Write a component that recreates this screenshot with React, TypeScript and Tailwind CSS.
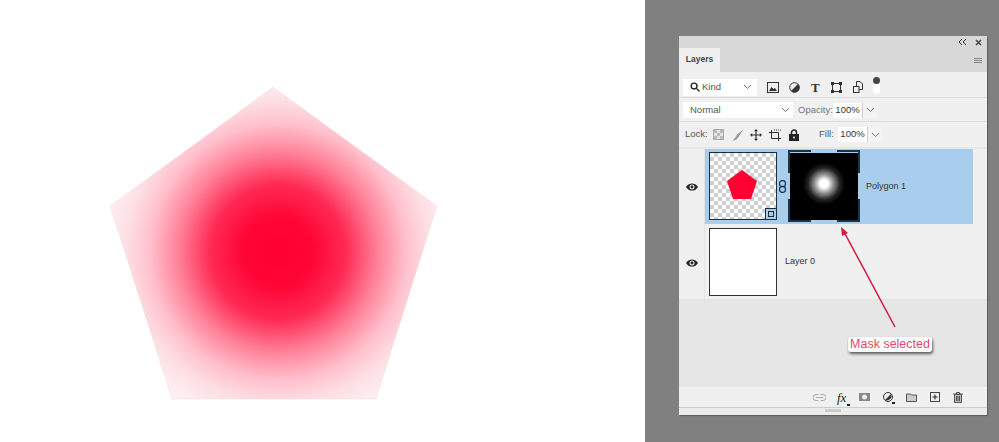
import React from "react";

const Chevron = () => (
  <svg width="9" height="6" viewBox="0 0 9 6" className="shrink-0"><path d="M1 1l3.500 3.500L8 1" fill="none" stroke="#777" strokeWidth="1" /></svg>
);

const Eye = () => (
  <svg width="12" height="8" viewBox="0 0 12 8" className="ml-[1px]"><path d="M0 4C2 1 3.800.4 6 .4S10 1 12 4C10 7 8.200 7.600 6 7.600S2 7 0 4z" fill="#222" /><circle cx="6" cy="4" r="2.500" fill="#eee" /><circle cx="6" cy="4" r="1.400" fill="#222" /></svg>
);

const Toolbar = () => (
  <div className="flex items-center">
    <svg width="12" height="11" viewBox="0 0 12 11" className="ml-[10px]"><rect x=".5" y=".5" width="11" height="10" fill="#f0f0f0" stroke="#333" /><path d="M2 9l2.500-4 2 2 1.500-1 2 3z" fill="#333" /></svg>
    <svg width="11" height="11" viewBox="0 0 11 11" className="ml-[10px]"><circle cx="5.500" cy="5.500" r="4.800" fill="#eee" stroke="#333" /><path d="M9 2A4.800 4.800 0 0 1 2 9z" fill="#333" /></svg>
    <span className="ml-[11px] w-[9px] text-[13px] leading-none font-bold text-[#333] [font-family:'Liberation_Serif',serif]">T</span>
    <svg width="11" height="11" viewBox="0 0 11 11" className="ml-[11px]"><rect x="1.500" y="1.500" width="8" height="8" fill="none" stroke="#333" /><path d="M0 0h3v3H0zM8 0h3v3H8zM0 8h3v3H0zM8 8h3v3H8z" fill="#333" /></svg>
    <svg width="10" height="12" viewBox="0 0 10 12" className="ml-[11px]"><path d="M3.500.5h3.500l2.500 2.500v5.500h-6z" fill="#eee" stroke="#333" /><rect x=".5" y="5.500" width="5.500" height="6" fill="#eee" stroke="#333" /></svg>
    <div className="relative ml-[10px] mt-[3px] h-[11px] w-[7px] rounded-[4px] bg-white">
      <div className="absolute -top-[6px] left-0 h-[7px] w-[7px] rounded-full bg-[#444]" />
    </div>
  </div>
);

const Lock = () => (
  <div className="flex h-full items-center pl-[6px] text-[9.5px] text-[#555]">
    <span className="w-[28px]">Lock:</span>
    <svg width="11" height="11" viewBox="0 0 11 11"><rect x=".5" y=".5" width="10" height="10" fill="#e4e4e4" stroke="#aaa" /><path d="M1 1h3v3H1zM7 1h3v3H7zM4 4h3v3H4zM1 7h3v3H1zM7 7h3v3H7z" fill="#bbb" /></svg>
    <svg width="12" height="12" viewBox="0 0 12 12" className="ml-[8px]"><path d="M11.500 .5L5 5.500 3 9l-2.500 2.500 3.500-.5 2.500-3z" fill="#999" /></svg>
    <svg width="12" height="12" viewBox="0 0 12 12" className="ml-[6px]"><path d="M6 0l2 2.200H6.600v3.200h3.200V4L12 6 9.800 8V6.600H6.600v3.200H8L6 12 4 9.800h1.400V6.600H2.200V8L0 6l2.200-2v1.400h3.200V2.200H4z" fill="#333" /></svg>
    <svg width="12" height="12" viewBox="0 0 12 12" className="ml-[7px]"><path d="M2.500 1v8.500H12M0 3.500h9.500V12" fill="none" stroke="#333" /><path d="M5 1h7" stroke="#333" strokeDasharray="1 1" /></svg>
    <svg width="10" height="12" viewBox="0 0 10 12" className="ml-[8px]"><path d="M2.500 5V3.500a2.500 2.500 0 0 1 5 0V5" fill="none" stroke="#222" strokeWidth="1.500" /><rect y="5" width="10" height="7" fill="#222" /><circle cx="5" cy="8.500" r="1" fill="#eee" /></svg>
    <span className="ml-[20px] w-[15px]">Fill:</span>
  </div>
);

const Percent = () => (
  <div className="flex h-[15px] items-stretch bg-white text-[9.5px] text-[#333]">
    <span className="flex w-[30px] items-center justify-center border-r border-[#ccc]">100%</span>
    <span className="flex w-[14px] items-center justify-center bg-[#f4f4f4]"><Chevron /></span>
  </div>
);

const Caret = () => <div className="absolute -bottom-[2px] -right-[2px] h-[2px] w-[3px] bg-[#222]" />;

export default function App() {
  return (
    <div className="relative flex h-[442px] w-[999px] overflow-hidden bg-[#808080] [font-family:'Liberation_Sans',sans-serif]">
      <div className="h-full w-[645px] shrink-0 bg-white">
        <svg width="645" height="442" viewBox="0 0 645 442" className="block">
          <defs>
            <radialGradient id="g" gradientUnits="userSpaceOnUse" cx="278" cy="252" r="178">
              <stop offset="0" stopColor="#ff0033" />
              <stop offset=".2" stopColor="#ff0636" />
              <stop offset=".38" stopColor="#ff2a54" />
              <stop offset=".56" stopColor="#ff8198" />
              <stop offset=".72" stopColor="#ffc0cc" />
              <stop offset=".85" stopColor="#fddfe4" />
              <stop offset="1" stopColor="#fef1f3" />
            </radialGradient>
          </defs>
          <polygon points="273,87 437,206 376,399 172,399 110,206" fill="url(#g)" stroke="#efd9dd" strokeWidth=".4" />
        </svg>
      </div>

      <div className="ml-[34px] mt-[36px] flex h-[379px] w-[308px] flex-col rounded-t-[2px] bg-[#f0f0f0] shadow-[1px_1px_1px_rgba(0,0,0,0.3)]">
        <div className="flex h-[12px] items-center justify-end gap-[9px] bg-[#d8d8d8] pr-[5px]">
          <svg width="7" height="6" viewBox="0 0 7 6"><path d="M3 0L0 3l3 3M7 0L4 3l3 3" fill="none" stroke="#333" /></svg>
          <svg width="7" height="7" viewBox="0 0 7 7"><path d="M1 1l5 5M6 1L1 6" stroke="#444" strokeWidth="1.500" /></svg>
        </div>
        <div className="flex h-[24px] items-stretch justify-between bg-[#d8d8d8]">
          <div className="flex w-[41px] items-center justify-center bg-[#f0f0f0] pb-[2px] text-[8.5px] font-bold text-[#444]">Layers</div>
          <div className="mr-[5px] flex flex-col justify-center gap-[1px]">
            <div className="h-[1px] w-[8px] bg-[#888]" /><div className="h-[1px] w-[8px] bg-[#888]" /><div className="h-[1px] w-[8px] bg-[#888]" />
          </div>
        </div>
        <div className="flex h-[26px] items-center border-b border-[#ddd] pl-[4px] pt-[5px]">
          <div className="flex h-[17px] w-[74px] items-center bg-white pl-[7px] pr-[5px] text-[9.5px] text-[#555]">
            <svg width="10" height="10" viewBox="0 0 11 11"><circle cx="4.500" cy="4.500" r="3.200" fill="none" stroke="#222" strokeWidth="1.500" /><path d="M7 7l3.500 3.500" stroke="#222" strokeWidth="1.500" /></svg>
            <span className="ml-[2px] flex-1">Kind</span>
            <Chevron />
          </div>
          <Toolbar />
        </div>
        <div className="flex h-[24px] items-center border-b border-[#ddd] pl-[4px] pt-[1px] text-[9.5px] text-[#555]">
          <div className="flex h-[16px] w-[110px] items-center justify-between bg-white pl-[7px] pr-[3px]">
            <span>Normal</span><Chevron />
          </div>
          <span className="ml-[5px] w-[35px] text-[#777]">Opacity:</span>
          <Percent />
        </div>
        <div className="flex h-[25px] items-center">
          <Lock />
          <div className="ml-[4px]"><Percent /></div>
        </div>
        <div className="flex h-[77px] items-stretch border-t-2 border-[#e6e6e6]">
          <div className="flex w-[26px] items-center justify-center border-r border-[#e4e4e4]"><Eye /></div>
          <div className="flex w-[268px] items-center bg-[#a9cdec] pl-[4px] text-[9px] text-[#333]">
            <div className="relative mb-[2px] h-[68px] w-[68px] border border-[#1c2c3a] bg-[repeating-conic-gradient(#d0d0d0_0_25%,#fff_0_50%)] bg-[length:8px_8px]">
              <svg width="66" height="66" viewBox="0 0 66 66" className="block"><polygon points="32,17 47,28 41,46 23,46 17,28" fill="#ff0033" /></svg>
              <div className="absolute -bottom-[1px] -right-[1px] flex h-[12px] w-[12px] items-center justify-center border border-[#1c2c3a] bg-[#a9cdec]">
                <div className="h-[6px] w-[6px] border border-[#1c2c3a]" />
              </div>
            </div>
            <svg width="7" height="13" viewBox="0 0 7 13" className="mx-[2px] shrink-0"><rect x=".6" y=".7" width="5.800" height="6" rx="2.500" fill="none" stroke="#1c2c3a" strokeWidth="1.200" /><rect x=".6" y="6.300" width="5.800" height="6" rx="2.500" fill="none" stroke="#1c2c3a" strokeWidth="1.200" /></svg>
            <div className="relative mb-[1px] h-[72px] w-[72px]">
              <div className="absolute bottom-[2px] left-[2px] right-[2px] top-[3px] bg-[radial-gradient(circle_at_50%_46%,#fff_0,#fff_4px,#999_9px,#222_16px,#000_21px)]" />
              <div className="absolute left-0 top-0 h-[23px] w-[2px] bg-[#1c3346]" />
              <div className="absolute bottom-0 left-0 h-[23px] w-[2px] bg-[#1c3346]" />
              <div className="absolute right-0 top-0 h-[23px] w-[2px] bg-[#1c3346]" />
              <div className="absolute bottom-0 right-0 h-[23px] w-[2px] bg-[#1c3346]" />
              <div className="absolute left-0 top-0 h-[2px] w-[23px] bg-[#1c3346]" />
              <div className="absolute right-0 top-0 h-[2px] w-[23px] bg-[#1c3346]" />
              <div className="absolute bottom-0 left-0 h-[2px] w-[23px] bg-[#1c3346]" />
              <div className="absolute bottom-0 right-0 h-[2px] w-[23px] bg-[#1c3346]" />
            </div>
            <span className="ml-[6px]">Polygon 1</span>
          </div>
        </div>
        <div className="flex h-[76px] items-stretch border-b border-[#e4e4e4]">
          <div className="flex w-[26px] items-center justify-center border-r border-[#e4e4e4] pt-[2px]"><Eye /></div>
          <div className="flex flex-1 items-center pl-[4px] pt-[1px] text-[9px] text-[#333]">
            <div className="h-[68px] w-[68px] border border-[#333] bg-white" />
            <span className="ml-[8px]">Layer 0</span>
          </div>
        </div>
        <div className="flex-1 border-l border-[#e4e4e4] bg-[#e6e6e6]" />
        <div className="flex h-[21px] items-center justify-end border-b border-[#ccc] bg-[#f0f0f0] pr-[24px]">
          <svg width="13" height="7" viewBox="0 0 13 7"><path d="M5.500 .5H3a3 3 0 0 0 0 6h2.500M7.500 .5H10a3 3 0 0 1 0 6H7.500M3 3.500h7" fill="none" stroke="#aaa" /></svg>
          <span className="relative ml-[11px] w-[11px] text-[13px] italic leading-none text-[#222] [font-family:'Liberation_Serif',serif]">fx<Caret /></span>
          <svg width="11" height="8" viewBox="0 0 11 8" className="ml-[11px]"><rect width="11" height="8" fill="#888" /><circle cx="5.500" cy="4" r="2.500" fill="#eee" /></svg>
          <div className="relative ml-[13px] h-[10px] w-[10px]">
            <svg width="10" height="10" viewBox="0 0 10 10" className="block"><circle cx="5" cy="5" r="4.500" fill="#eee" stroke="#333" /><path d="M8 2A4.500 4.500 0 0 1 2 8z" fill="#333" /></svg>
            <Caret />
          </div>
          <svg width="11" height="9" viewBox="0 0 11 9" className="ml-[13px]"><path d="M.5 1h4l1 1h5v6.500H.5z" fill="#ccc" stroke="#555" /></svg>
          <svg width="10" height="10" viewBox="0 0 10 10" className="ml-[13px]"><rect x=".5" y=".5" width="9" height="9" fill="#eee" stroke="#444" /><path d="M5 2.500v5M2.500 5h5" stroke="#222" /></svg>
          <svg width="10" height="11" viewBox="0 0 10 11" className="ml-[13px]"><path d="M0 2h10M3.500 2V.5h3V2" fill="none" stroke="#555" /><path d="M1.500 2.500h7V10.500h-7z" fill="#bbb" stroke="#555" /><path d="M3.500 4v5M5 4v5M6.500 4v5" stroke="#555" /></svg>
        </div>
        <div className="flex h-[7px] justify-center bg-[#ececec]">
          <div className="mt-[1px] h-[3px] w-[16px] bg-[#ccc]" />
        </div>
      </div>

      <svg width="70" height="110" viewBox="0 0 70 110" className="absolute left-[836px] top-[223px]">
        <path d="M59 104L7 7" stroke="#d9183f" strokeWidth="1.500" fill="none" />
        <path d="M5 4L6 13 12 10z" fill="#d9183f" />
      </svg>
      <div className="absolute left-[848px] top-[337px] flex h-[15px] w-[84px] items-center justify-center rounded-[3px] bg-white text-[12.5px] text-[#e8486a] shadow-[1px_2px_3px_rgba(0,0,0,0.6)]">
        Mask selected
      </div>
    </div>
  );
}
